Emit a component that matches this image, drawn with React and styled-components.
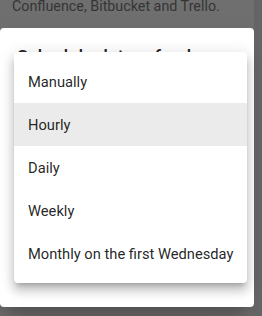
import React from "react";
import styled, { createGlobalStyle } from "styled-components";

const Global = createGlobalStyle`
  html, body { margin: 0; padding: 0; }
  body {
    width: 262px;
    height: 316px;
    overflow: hidden;
    background: #6f6f6f;
    font-family: Roboto, "Liberation Sans", sans-serif;
  }
`;

const Page = styled.div`
  position: relative;
  width: 262px;
  height: 316px;
  display: flex;
  overflow: hidden;
`;

const Main = styled.div`
  flex: 1;
  display: flex;
  flex-direction: column;
`;

const Scroll = styled.div`
  width: 8px;
  background: #646464;
`;

const BackText = styled.div`
  margin: -4px 0 0 12px;
  height: 32px;
  font-size: 14.3px;
  line-height: 20px;
  color: #353535;
  white-space: nowrap;
`;

const Dialog = styled.div`
  width: 254px;
  height: 279px;
  background: #fff;
  border-radius: 4px;
  box-shadow: 0 11px 15px -7px rgba(0,0,0,0.2), 0 24px 38px 3px rgba(0,0,0,0.14);
  box-sizing: border-box;
  padding: 14px 17px;
`;

const Title = styled.h2`
  margin: 0;
  font-size: 18.4px;
  font-weight: 500;
  line-height: 29.4px;
  color: rgba(0,0,0,0.87);
  white-space: nowrap;
`;

const Menu = styled.ul`
  position: absolute;
  left: 14px;
  top: 52px;
  width: 233px;
  margin: 0;
  padding: 8px 0;
  list-style: none;
  background: #fff;
  border-radius: 4px;
  box-shadow: 0px 5px 5px -3px rgba(0,0,0,0.2), 0px 8px 10px 1px rgba(0,0,0,0.14), 0px 3px 14px 2px rgba(0,0,0,0.12);
`;

const Item = styled.li`
  height: 43px;
  display: flex;
  align-items: center;
  padding: 0 14px;
  font-size: 14.7px;
  color: rgba(0,0,0,0.87);
  white-space: nowrap;
  background: ${(p) => (p.$active ? "#ebebeb" : "transparent")};
`;

const options = ["Manually", "Hourly", "Daily", "Weekly", "Monthly on the first Wednesday"];

export default function App() {
  return (
    <Page>
      <Global />
      <Main>
        <BackText>Confluence, Bitbucket and Trello.</BackText>
        <Dialog>
          <Title>Schedule data refresh</Title>
        </Dialog>
      </Main>
      <Scroll />
      <Menu>
        {options.map((o) => (
          <Item key={o} $active={o === "Hourly"}>{o}</Item>
        ))}
      </Menu>
    </Page>
  );
}
